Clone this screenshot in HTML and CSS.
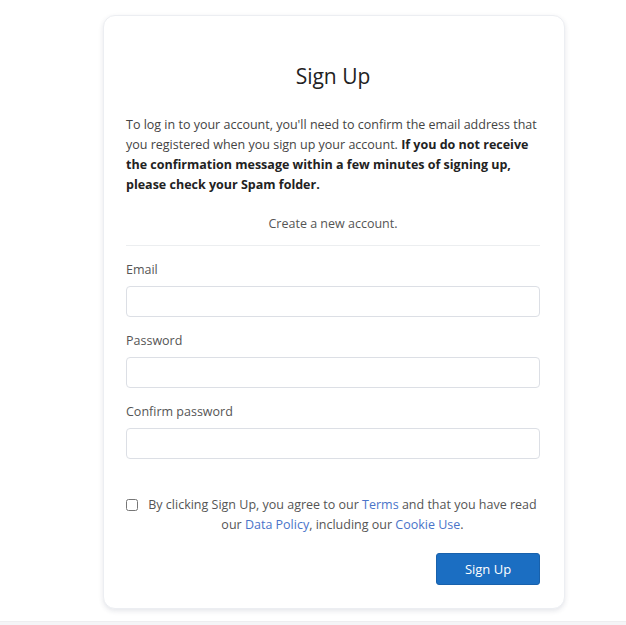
FILE: index.html
```html
<!DOCTYPE html>
<html>
<head>
  <title>Sign Up</title>
  <link rel="stylesheet" href="styles.css">
</head>
<body>

<section class="page">
  <div class="card">
    <h1 class="title">Sign Up</h1>
    <p class="notice">To log in to your account, you'll need to confirm the email address that you registered when you sign up your account. <b>If you do not receive the confirmation message within a few minutes of signing up, please check your Spam folder.</b></p>
    <p class="subtitle">Create a new account.</p>
    <hr class="divider">

    <form class="form">
      <label class="field">
        <span class="label">Email</span>
        <input class="input" type="email">
      </label>
      <label class="field">
        <span class="label">Password</span>
        <input class="input" type="password">
      </label>
      <label class="field">
        <span class="label">Confirm password</span>
        <input class="input" type="password">
      </label>

      <div class="agree">
        <input class="check" type="checkbox">
        <p class="agree-text">By clicking Sign Up, you agree to our <a href="#">Terms</a> and that you have read our <a href="#">Data Policy</a>, including our <a href="#">Cookie Use</a>.</p>
      </div>

      <div class="actions">
        <button class="btn" type="button">Sign Up</button>
      </div>
    </form>
  </div>
</section>

<footer class="footer"></footer>

</body>
</html>
```

FILE: styles.css
```css
body {
  margin: 0;
  padding: 0;
  background: #fff;
  font-family: "Open Sans", "Noto Sans", sans-serif;
  color: #212529;
}

.page {
  padding: 15px 0 0 103px;
  height: 621px;
  box-sizing: border-box;
}

.card {
  width: 462px;
  box-sizing: border-box;
  padding: 40px 24px 23px 22px;
  background: #fff;
  border: 1px solid #eceef2;
  border-radius: 12px;
  box-shadow: 0 2px 5px rgba(40, 50, 80, 0.12);
}

.title {
  margin: 0 0 19px;
  text-align: center;
  font-size: 21px;
  font-weight: 400;
  line-height: 40px;
  color: #222;
}

.notice {
  margin: 0;
  font-size: 12.5px;
  line-height: 20px;
  color: #444;
}

.notice b {
  color: #222;
  font-weight: 700;
}

.subtitle {
  margin: 19px 0 0;
  text-align: center;
  font-size: 12.5px;
  line-height: 20px;
  color: #555;
}

.divider {
  margin: 11px 0 14px;
  border: 0;
  border-top: 1px solid #eceef0;
}

.field {
  display: block;
  margin-bottom: 14px;
}

.label {
  display: block;
  font-size: 12.5px;
  line-height: 20px;
  color: #555;
  margin-bottom: 6px;
}

.input {
  display: block;
  width: 100%;
  height: 31px;
  box-sizing: border-box;
  border: 1px solid #dcdfe5;
  border-radius: 4px;
  outline: none;
}

.agree {
  display: flex;
  align-items: flex-start;
  gap: 7px;
  margin-top: 36px;
}

.agree-text {
  margin: 0;
  font-size: 12.5px;
  line-height: 20px;
  color: #555;
  text-align: center;
}

.check {
  margin: 4px 0 0;
  width: 12px;
  height: 12px;
}

.agree a {
  color: #4a74c9;
  text-decoration: none;
}

.actions {
  display: flex;
  justify-content: flex-end;
  margin-top: 18px;
}

.btn {
  width: 104px;
  height: 32px;
  border: 1px solid #1861ac;
  border-radius: 3px;
  background: #1b6ec2;
  color: #fff;
  font-family: inherit;
  font-size: 13px;
}

.footer {
  height: 4px;
  background: #f5f5f7;
  border-top: 1px solid #eeeef0;
}
```
